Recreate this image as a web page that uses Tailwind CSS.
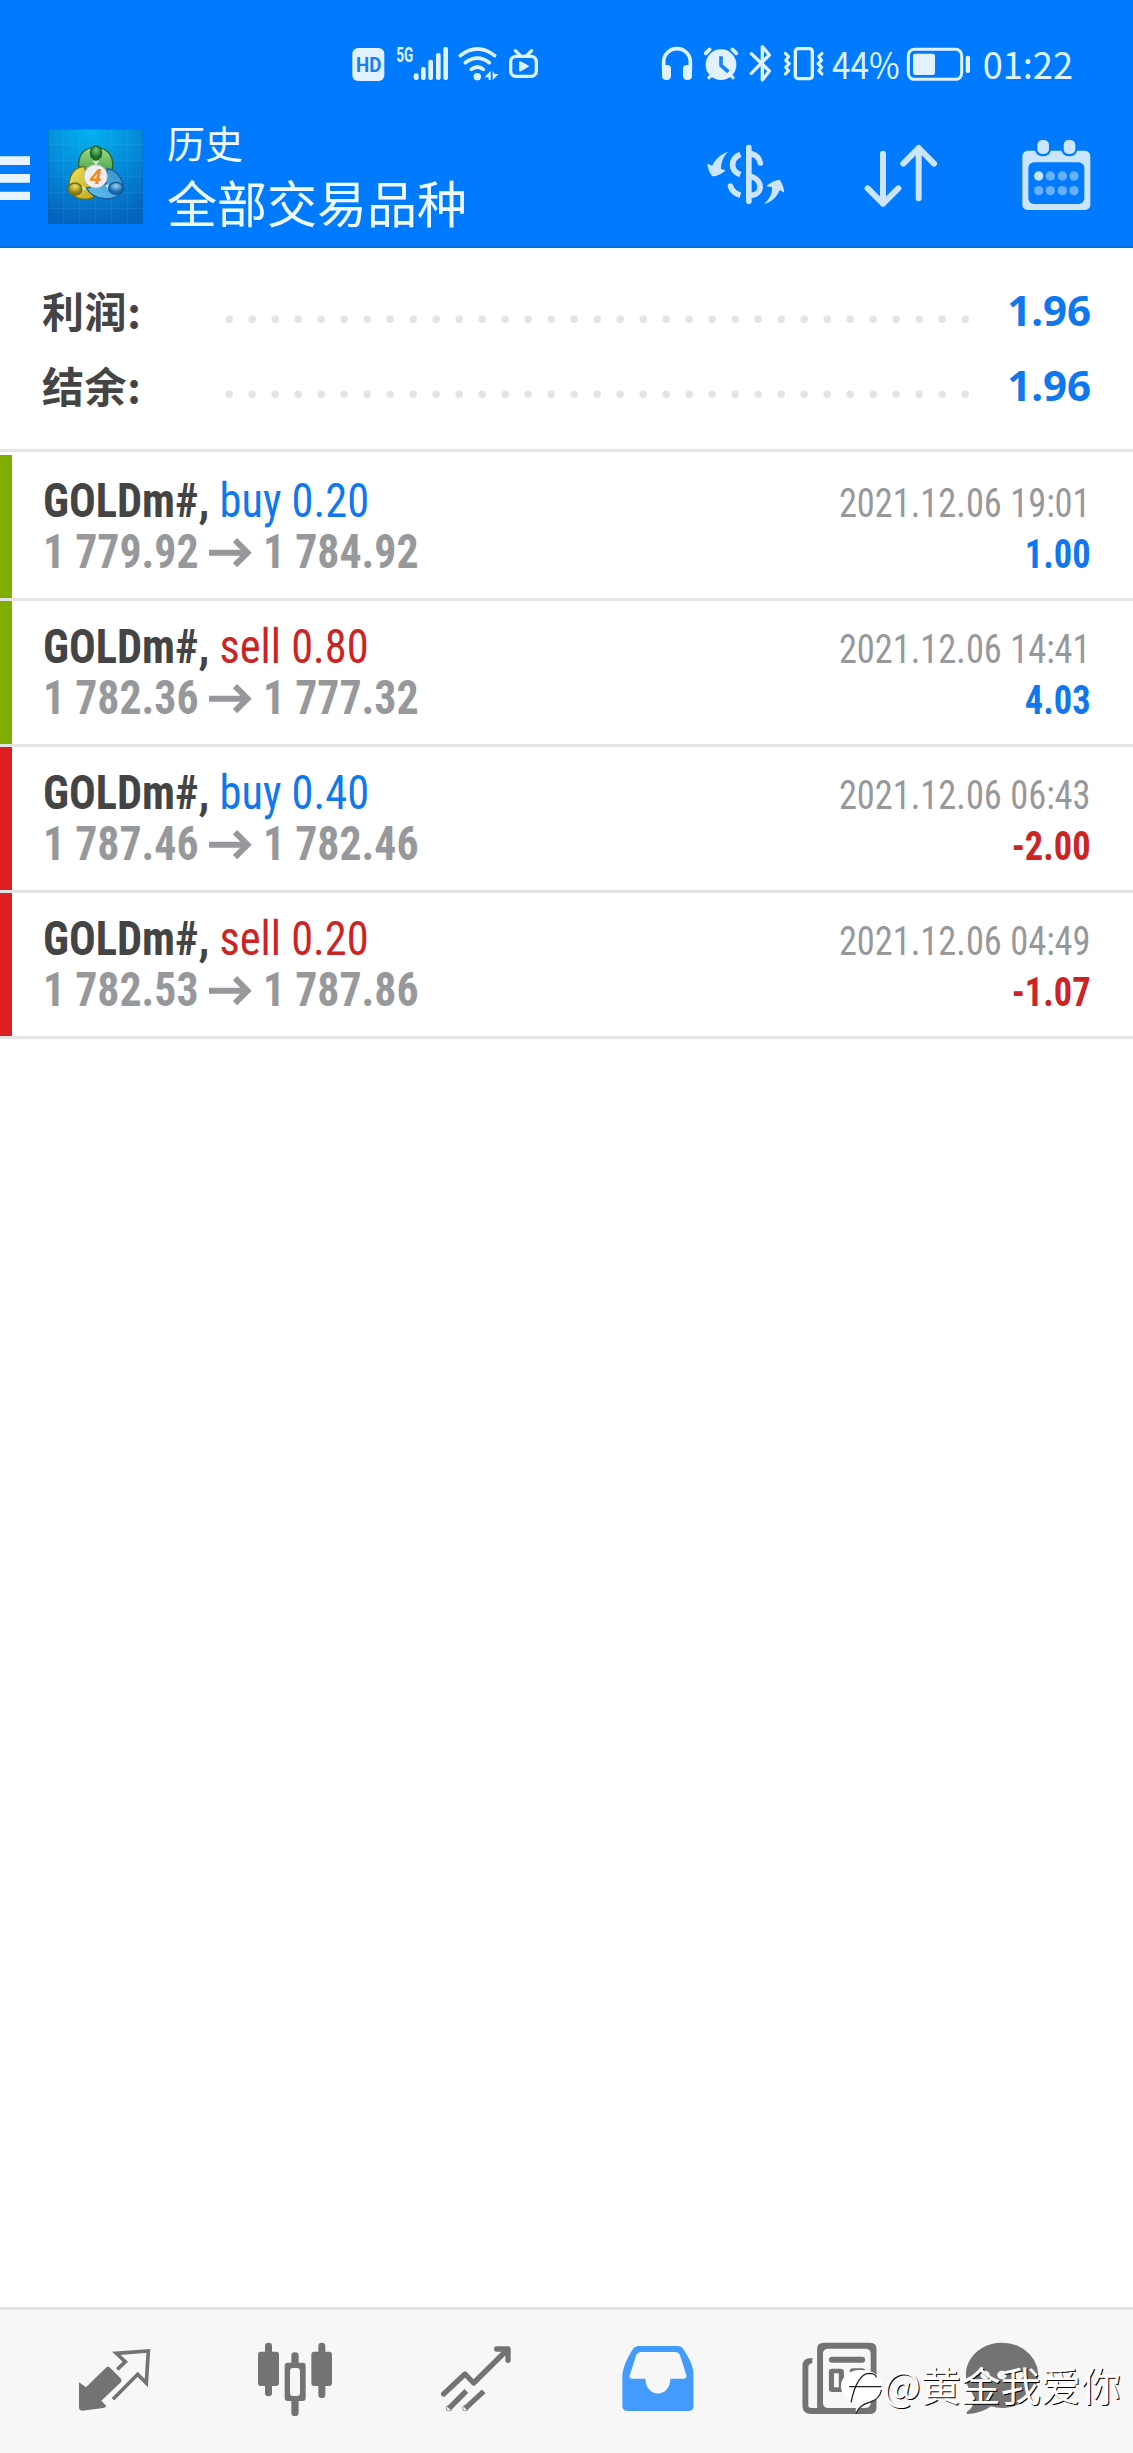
<!DOCTYPE html>
<html lang="zh"><head><meta charset="utf-8"><title>历史</title>
<script src="https://cdn.jsdelivr.net/npm/@tailwindcss/browser@4"></script></head>
<body class="relative flex h-[2453px] w-[1133px] flex-col overflow-hidden bg-white font-['Roboto','Noto_Sans_CJK_SC',sans-serif]">
<header class="flex h-[248px] shrink-0 flex-col border-b-2 border-[#0070e2] bg-[#007bff]">
  <div class="flex h-[110px] shrink-0 items-start pt-[30px] text-[#dff3ff]">
    <svg class="ml-[350px] h-[70px] w-[40px]" viewBox="30 0 120 210"><rect x="37" y="54" width="96" height="99" rx="17" fill="#e2f1ff"/><text x="48" y="127" font-family="Roboto" font-weight="700" font-size="60" textLength="76" lengthAdjust="spacingAndGlyphs" fill="#1580ef">HD</text></svg>
    <svg class="h-[70px] w-[65px]" viewBox="150 0 195 210" fill="currentColor"><text x="169" y="95" font-family="Roboto" font-weight="700" font-size="61" textLength="51" lengthAdjust="spacingAndGlyphs">5G</text><rect x="221" y="130" width="15" height="20" rx="7"/><rect x="243" y="111" width="14" height="39" rx="6"/><rect x="265" y="89" width="14" height="61" rx="6"/><rect x="288" y="69" width="14" height="81" rx="6"/><rect x="310" y="51" width="14" height="99" rx="6"/></svg>
    <svg class="h-[70px] w-[50px]" viewBox="345 0 150 210" fill="none" stroke="currentColor" stroke-width="11" stroke-linecap="round"><path d="M361 77Q412 36 464 77M376 98Q412 71 448 98M394 118Q412 104 430 118"/><circle cx="412" cy="140" r="11" fill="currentColor" stroke="none"/><path d="M434 142L452 122V150H446V142ZM458 122V150L476 132H464Z" fill="currentColor" stroke="none"/></svg>
    <svg class="h-[70px] w-[40px]" viewBox="495 0 120 210" fill="none" stroke="currentColor" stroke-width="10" stroke-linecap="round"><rect x="512" y="79" width="77" height="60" rx="16"/><path d="M526 62L541 77M575 62L560 77"/><path d="M540 96V122L564 109Z" fill="currentColor" stroke-width="5" stroke-linejoin="round"/></svg>
    <svg class="ml-[113px] h-[70px] w-[40px]" viewBox="54 0 120 210" fill="none" stroke="currentColor" stroke-width="11"><path d="M71 120V96A40 40 0 0 1 151 96V120"/><path d="M66 105H82Q93 106 93 116V138Q92 150 80 150Q66 150 66 137ZM156 105H140Q129 106 129 116V138Q130 150 142 150Q156 150 156 137Z" fill="currentColor" stroke="none"/></svg>
    <svg class="h-[70px] w-[46px]" viewBox="174 0 138 210" fill="none" stroke="currentColor" stroke-linecap="round"><circle cx="243" cy="104" r="46" fill="#e2f1ff" stroke="none"/><path d="M197 70L209 58M289 70L277 58" stroke-width="11"/><path d="M207 143L214 136M279 143L272 136" stroke-width="10"/><path d="M243 84V106L261 122" stroke="#1784f5" stroke-width="11" stroke-linecap="square"/></svg>
    <svg class="h-[70px] w-[34px]" viewBox="312 0 102 210" fill="none" stroke="currentColor" stroke-width="10" stroke-linecap="round" stroke-linejoin="round"><path d="M334 71L388 123L367 150V50L388 75L334 130"/></svg>
    <svg class="h-[70px] w-[52px]" viewBox="414 0 156 210" fill="none" stroke="currentColor" stroke-width="9" stroke-linecap="round" stroke-linejoin="round"><rect x="466" y="56" width="51" height="90" rx="9" stroke-width="10"/><path d="M436 70L446 80L437 91L448 101L437 112L446 122L436 132M546 70L536 80L545 91L534 101L545 112L536 122L546 132"/></svg>
    <svg class="h-[70px] w-[73px] overflow-visible" viewBox="570 0 219 210" fill="currentColor"><text x="576" y="148" font-family="Noto Sans CJK SC" font-weight="400" font-size="110" textLength="203" lengthAdjust="spacingAndGlyphs">44%</text></svg>
    <svg class="h-[70px] w-[72px]" viewBox="789 0 216 210" fill="none" stroke="currentColor" stroke-width="9"><rect x="805" y="58" width="160" height="90" rx="18"/><rect x="819" y="71" width="66" height="64" rx="7" fill="#e2f1ff" stroke="none"/><rect x="977" y="77" width="13" height="52" rx="6" fill="currentColor" stroke="none"/></svg>
    <svg class="h-[70px] w-[110px]" viewBox="1005 0 330 210" fill="currentColor"><text x="1028" y="148" font-family="Noto Sans CJK SC" font-size="110" textLength="271" lengthAdjust="spacingAndGlyphs">01:22</text></svg>
  </div>
  <div class="flex h-[136px] shrink-0 items-start">
    <svg class="h-[136px] w-[48px]" viewBox="0 0 144 408" fill="#e8f5ff"><path d="M0 139H90V165H0ZM0 192H90V218H0ZM0 245H90V270H0Z"/></svg>
    <svg class="h-[136px] w-[119px]" viewBox="144 0 357 408">
      <defs><radialGradient id="sky" cx=".45" cy="0" r="1"><stop offset="0" stop-color="#03b3f0"/><stop offset=".55" stop-color="#0587d7"/><stop offset="1" stop-color="#0564bd"/></radialGradient>
      <linearGradient id="gr" x2="0" y2="1"><stop stop-color="#a5d58d"/><stop offset="1" stop-color="#2c9a33"/></linearGradient><linearGradient id="ye" x2="1" y2="1"><stop stop-color="#efe25c"/><stop offset="1" stop-color="#b8a516"/></linearGradient><linearGradient id="bl" x1="1" x2="0" y2="1"><stop stop-color="#318ac9"/><stop offset="1" stop-color="#66c2f5"/></linearGradient>
      <radialGradient id="g2" cy=".3"><stop stop-color="#7ec878"/><stop offset="1" stop-color="#187227"/></radialGradient><radialGradient id="y2" cy=".3"><stop stop-color="#f3e56b"/><stop offset="1" stop-color="#8c8212"/></radialGradient><radialGradient id="b2" cy=".3"><stop stop-color="#9bd7f5"/><stop offset="1" stop-color="#1768ae"/></radialGradient></defs>
      <rect x="144" y="57" width="285" height="285" fill="url(#sky)"/>
      <path d="M191 58V342M239 58V342M287 58V342M335 58V342M383 58V342M144 103H429M144 151H429M144 199H429M144 247H429M144 295H429" stroke="#5bc8ff" stroke-opacity=".22" stroke-width="2"/><rect x="145" y="58" width="283" height="283" fill="none" stroke="#075ba8" stroke-opacity=".5" stroke-width="2"/>
      <g stroke-width="4"><path d="M236 168C234 130 256 112 288 112C322 113 341 138 338 170C337 190 327 199 315 207L260 180Z" fill="url(#gr)" stroke="#23692a"/>
      <path d="M254 170C222 170 203 198 208 240C217 262 245 272 270 266C286 262 294 250 300 238L262 222Z" fill="url(#ye)" stroke="#776e13"/>
      <path d="M322 175C350 180 370 205 370 238C361 260 335 270 310 265C284 262 267 251 260 234L318 222Z" fill="url(#bl)" stroke="#165d9c"/>
      <path d="M244 225L258 238L240 244ZM316 224H330L325 240ZM278 152H298L288 166Z" fill="#d8ecd8" stroke="none"/>
      <ellipse cx="288" cy="129" rx="17" ry="21" fill="url(#g2)" stroke="#1f6928"/><ellipse cx="225" cy="237" rx="21" ry="18" fill="url(#y2)" stroke="#736b10"/><ellipse cx="348" cy="235" rx="22" ry="18" fill="url(#b2)" stroke="#135796"/></g>
      <circle cx="287" cy="199" r="35" fill="#efeff0" stroke="#b9bbc0" stroke-width="3"/><text x="287" y="221" text-anchor="middle" font-family="Noto Sans" font-style="italic" font-weight="700" font-size="63" fill="#f08a24">4</text>
    </svg>
    <div class="flex h-full w-[301px] flex-col pt-[10px] whitespace-nowrap text-[#f0fbff]"><p class="text-[38px]/[50px]">历史</p><h1 class="pt-[6px] text-[50px]/[60px]">全部交易品种</h1></div>
    <svg class="mt-[10px] ml-[239px] h-[110px] w-[100px]" viewBox="80 0 300 330" fill="none" stroke="#cce5ff" stroke-width="17" stroke-linecap="round"><path d="M205.500 83V244M214 101Q236 107 240 129M214 170C248 182 248 222 214 226"/><path d="M180 103C149 116 149 152 180 164M150 198Q157 219 180 226" stroke-linecap="butt"/><circle cx="150" cy="198" r="8" fill="#cce5ff" stroke="none"/><path d="M143 96C122 101 103 119 96 137L81 131Q83 153 96 169Q117 169 136 151L122 147C122 126 130 108 143 96ZM251 252C268 236 276 221 275 202L258 199Q276 181 298 179Q310 196 312 218L298 210C291 229 274 247 251 252Z" fill="#cce5ff" stroke="none"/></svg>
    <svg class="mt-[10px] ml-[55px] h-[110px] w-[80px]" viewBox="545 0 240 330" fill="none" stroke="#cce5ff" stroke-width="18" stroke-linecap="round" stroke-linejoin="round"><path d="M608 101V251M562 205L608 251L654 205M715 235V84M669 131L715 84L761 131"/></svg>
    <svg class="mt-[10px] ml-[75px] h-[110px] w-[80px]" viewBox="1010 0 240 330"><path d="M1043 92H1213Q1230 93 1230 110V253Q1229 270 1213 270H1043Q1026 269 1026 253V110Q1026 93 1043 92Z" fill="#cce5ff"/><rect x="1064" y="54" width="48" height="55" rx="22" fill="#007bff"/><rect x="1143" y="54" width="48" height="55" rx="22" fill="#007bff"/><rect x="1071" y="60" width="35" height="42" rx="15" fill="#cce5ff"/><rect x="1150" y="60" width="35" height="42" rx="15" fill="#cce5ff"/><rect x="1044" y="127" width="168" height="125" rx="17" fill="#007bff"/><g fill="#66b0ff"><circle cx="1075" cy="168" r="14" fill="#cce5ff"/><circle cx="1110" cy="168" r="14"/><circle cx="1146" cy="168" r="14"/><circle cx="1181" cy="168" r="14"/><circle cx="1075" cy="212" r="14"/><circle cx="1110" cy="212" r="14"/><circle cx="1146" cy="212" r="14"/><circle cx="1181" cy="212" r="14"/></g></svg>
  </div>
</header>
<section class="flex h-[204px] shrink-0 flex-col border-b-[3px] border-[#e4e4e4] pt-[26px] pr-[42px] pl-[42px] text-[42px]/[75px] font-bold">
  <div class="flex h-[75px] items-start text-[#444]"><span class="-mt-[2px] w-[178px] font-['Noto_Sans_CJK_SC',sans-serif] tracking-[0.6px]">利润:</span><svg class="h-[75px] w-[760px]" viewBox="0 0 760 75"><path d="M9.200 45.300H760" stroke="#e4e4e4" stroke-width="7.600" stroke-linecap="round" stroke-dasharray="0 23"/></svg><span class="-mt-[2px] ml-auto font-['Noto_Sans',sans-serif] text-[#0f78ee]">1.96</span></div>
  <div class="flex h-[75px] items-start text-[#444]"><span class="-mt-[2px] w-[178px] font-['Noto_Sans_CJK_SC',sans-serif] tracking-[0.6px]">结余:</span><svg class="h-[75px] w-[760px]" viewBox="0 0 760 75"><path d="M9.200 45.300H760" stroke="#e4e4e4" stroke-width="7.600" stroke-linecap="round" stroke-dasharray="0 23"/></svg><span class="-mt-[2px] ml-auto font-['Noto_Sans',sans-serif] text-[#0f78ee]">1.96</span></div>
</section>
<main id="list" class="flex flex-1 flex-col pt-[3px]"></main>
<footer class="flex h-[146px] shrink-0 items-start border-t-[3px] border-[#e2e2e2] bg-[#f7f7f7] pl-[40px] text-[#737373]">
  <svg class="h-[143px] w-[120px]" viewBox="0 60 360 429" fill="currentColor"><path d="M117 277L138 292L197 234Q204 227 211 234L241 264Q248 271 241 278L184 332L199 348Q198 353 190 354L126 362Q117 362 117 352Z"/><path d="M232 238L256 215L229 190L325 183L319 279L293 253L219 328" fill="none" stroke="currentColor" stroke-width="11"/></svg>
  <svg class="ml-[80px] h-[143px] w-[110px]" viewBox="600 60 330 429" fill="currentColor"><rect x="654" y="185" width="63" height="103" rx="9"/><rect x="675" y="158" width="21" height="161" rx="10"/><rect x="814" y="185" width="62" height="103" rx="9"/><rect x="835" y="158" width="21" height="166" rx="10"/><rect x="754" y="187" width="22" height="45" rx="10"/><rect x="754" y="320" width="22" height="58" rx="10"/><rect x="734" y="218" width="63" height="115" rx="9"/><rect x="750" y="234" width="30" height="84" rx="9" fill="#f7f7f7"/></svg>
  <svg class="ml-[80px] h-[143px] w-[90px]" viewBox="1170 60 270 429" fill="none" stroke="currentColor" stroke-width="16" stroke-linejoin="round" stroke-linecap="round"><path d="M1211 312L1275 252L1301 279L1401 180M1370 177H1404V211" /><path d="M1227 355L1279 303M1276 355L1331 304" stroke-linecap="butt"/><circle cx="1227" cy="355" r="1"/><circle cx="1276" cy="355" r="1"/></svg>
  <svg class="ml-[84px] h-[143px] w-[99px]" viewBox="120 60 270 429" preserveAspectRatio="none"><path d="M213 168H322Q331 168 336 176C352 204 364 228 364 256V348Q364 363 349 363H185Q170 363 170 348V256C172 228 184 204 199 176Q204 168 213 168Z" fill="#449bff"/><path d="M222 186H313Q323 186 327 195L345 257Q346 266 337 266H301C300 325 234 325 233 266H198Q188 266 190 257L208 195Q212 186 222 186Z" fill="#f7f7f7"/></svg>
  <svg class="ml-[98px] h-[143px] w-[88px]" viewBox="660 60 240 429" preserveAspectRatio="none" fill="currentColor"><path d="M691 204Q664 202 664 228V349Q665 372 688 372H849Q866 371 866 353V177Q866 158 848 158H722Q704 158 704 177V354H688Q680 354 680 346V232Q680 222 691 219Z"/><rect x="720" y="176" width="130" height="178" rx="14" fill="#f7f7f7"/><rect x="736" y="200" width="99" height="18" rx="9"/><rect x="743" y="243" width="27" height="56" rx="2" fill="none" stroke="currentColor" stroke-width="14"/><rect x="793" y="235" width="42" height="17" rx="8"/><rect x="793" y="262" width="42" height="17" rx="8"/><rect x="793" y="289" width="42" height="17" rx="8"/></svg>
  <svg class="ml-[77px] h-[143px] w-[88px]" viewBox="1110 60 240 429" preserveAspectRatio="none" fill="currentColor"><path d="M1208 158A98 98 0 1 1 1178 349C1162 362 1140 371 1113 372Q1110 368 1115 363Q1132 351 1133 320A98 98 0 0 1 1208 158Z"/><g fill="#f7f7f7"><circle cx="1162" cy="255" r="13"/><circle cx="1208" cy="255" r="13"/><circle cx="1254" cy="255" r="13"/></g></svg>
</footer>
<div class="absolute top-[2360px] left-[840px] flex items-start">
  <svg class="h-[60px] w-[43px]" viewBox="765 210 117 180" preserveAspectRatio="none"><path d="M828 241A50 48 0 0 1 832 337L808 371V336A50 48 0 0 1 828 241Z" fill="#fff"/><path d="M795 337Q811 252 844 250Q863 250 864 262M790 290H878M808 371Q820 343 845 337Q872 330 878 300" fill="none" stroke="#222" stroke-width="3.500"/></svg>
  <span class="-mt-[3px] font-['Noto_Sans_CJK_SC',sans-serif] text-[40px]/[54px] whitespace-nowrap text-white [text-shadow:1px_1px_0_#000]">@黄金我爱你</span>
</div>
<script>
const rows=[['buy 0.20','1 779.92','1 784.92','2021.12.06 19:01','1.00',1],['sell 0.80','1 782.36','1 777.32','2021.12.06 14:41','4.03',1],['buy 0.40','1 787.46','1 782.46','2021.12.06 06:43','-2.00',0],['sell 0.20','1 782.53','1 787.86','2021.12.06 04:49','-1.07',0]];
document.getElementById('list').innerHTML=rows.map(([op,a,b,d,p,win])=>`<article class="flex h-[146px] shrink-0 border-b-[3px] border-[#e4e4e4] font-stretch-condensed">
<div class="w-[12px] ${win?'bg-[#7fae00]':'bg-[#df1f1f]'}"></div>
<div class="flex flex-1 items-start justify-between pr-[42px] pl-[31px] pt-[20px] whitespace-nowrap">
<div class="text-[48px]/[51px]"><p class="origin-left scale-x-[0.925]"><b class="text-[#444]">GOLDm#,</b> <span class="${op[0]=='b'?'text-[#0f78ee]':'text-[#cc2424]'}">${op}</span></p>
<p class="flex font-bold text-[#97989c]"><span class="w-[166px] origin-left scale-x-[0.912]">${a}</span><svg class="h-[51px] w-[54px]" viewBox="0 0 54 51" fill="none" stroke="currentColor" stroke-width="6"><path d="M0 26.700H39M26 14.200L38.500 26.700L26 39.200"/></svg><span class="origin-left scale-x-[0.912]">${b}</span></p></div>
<div class="origin-right scale-x-[0.91] pt-[3px] text-right text-[40px]/[51px]"><p class="text-[#97989c]">${d}</p><p class="font-bold ${win?'text-[#0f78ee]':'text-[#cc2424]'}">${p}</p></div></div></article>`).join('');
</script></body></html>
